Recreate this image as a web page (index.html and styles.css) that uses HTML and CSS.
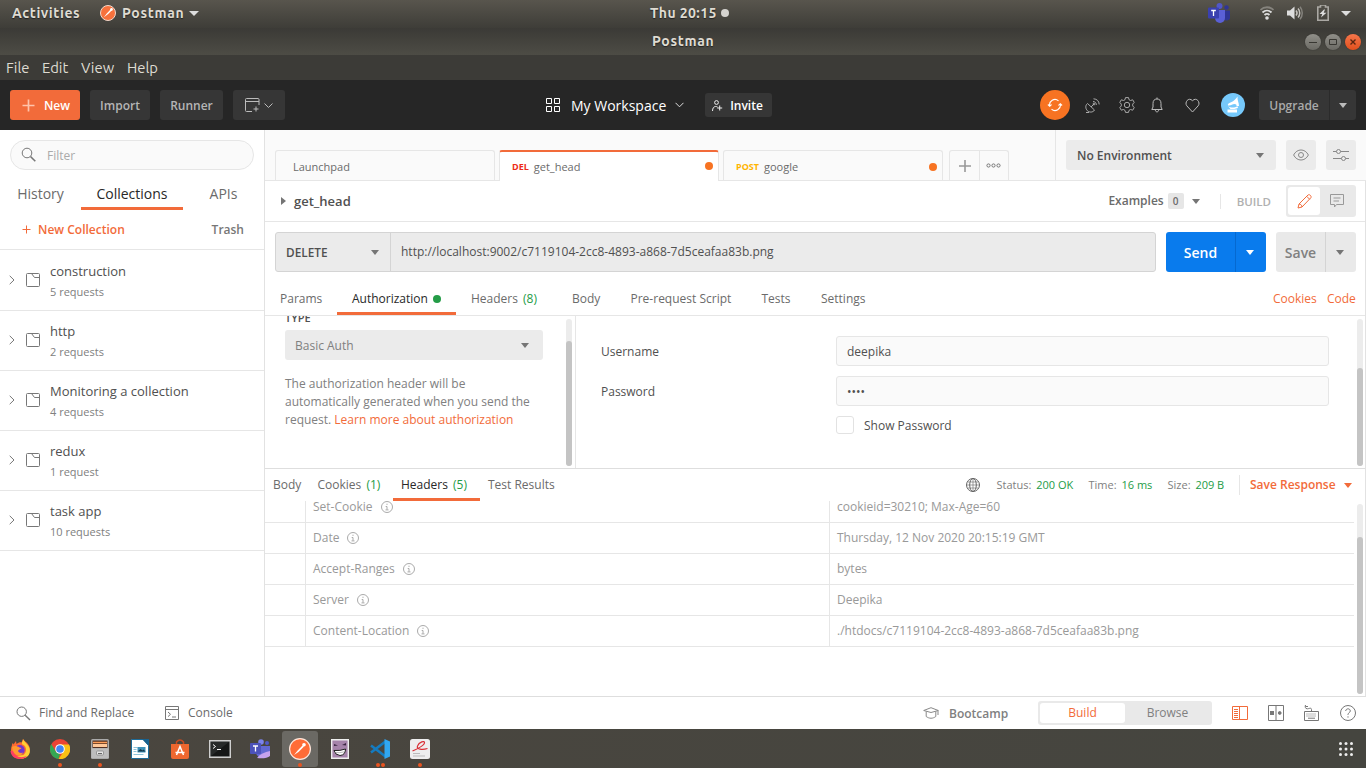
FILE: index.html
```html
<!DOCTYPE html>
<html lang="en">
<head>
<meta charset="utf-8">
<title>Postman</title>
<link rel="stylesheet" href="styles.css">
</head>
<body>
<div class="desktop">
  <div class="panel">
    <span class="panel-activities">Activities</span>
    <svg class="panel-logo" width="16" height="16" viewBox="0 0 16 16"><circle cx="8" cy="8" r="7.5" fill="#f7713c" stroke="#f3d9cc"/><path d="M3.6 12.6 7 8.2 11 4l1.2.9-4 4.2z" fill="#fff"/><circle cx="11.5" cy="4.4" r="1.3" fill="#fff"/></svg>
    <span class="panel-app">Postman</span>
    <i class="caret light"></i>
    <span class="panel-clock">Thu 20:15</span>
    <i class="panel-dot"></i>
    <svg class="teams-tray" width="22" height="20" viewBox="0 0 22 20"><circle cx="18.500" cy="4.500" r="2.200" fill="#2f3594"/><circle cx="11.500" cy="3" r="3" fill="#5157c8"/><path d="M16 7.500h6v8a4 4 0 0 1-6 1z" fill="#2f3594"/><path d="M7 7h10v8a5 5 0 0 1-10 0z" fill="#5a60d6"/><rect y="4.500" width="11" height="11" rx="1" fill="#3a40b0"/><path d="M3.200 7.500h4.600M5.500 7.500V13" stroke="#fff" stroke-width="1.300"/></svg>
    <svg class="wifi" width="14" height="14" viewBox="0 0 14 14" fill="none" stroke-width="1.800"><path d="M.5 4C4 .3 10 .3 13.500 4" stroke="#85837d"/><path d="M2.500 6.500c2.700-2.600 6.300-2.600 9 0M4.500 9c1.500-1.400 3.500-1.400 5 0" stroke="#ddd"/><circle cx="7" cy="12" r="1.800" fill="#ddd"/></svg>
    <svg class="volume" width="16" height="14" viewBox="0 0 16 14" fill="none" stroke-width="1.500"><path d="M0 4.500h3L7.500.5v13L3 9.500H0z" fill="#ddd"/><path d="M9 4.500c1.300 1.500 1.300 3.500 0 5M11 2.500c2.300 2.500 2.300 6.500 0 9" stroke="#c5c3be"/><path d="M13 .8c3 3.500 3 9 0 12.400" stroke="#85837d"/></svg>
    <svg class="battery" width="12" height="16" viewBox="0 0 12 16"><path d="M3.500 2V0h5v2h2.700v13.200H.8V2z" fill="none" stroke="#aaa8a3" stroke-width="1.600"/><path d="M7 4.500 2.500 9h2.800L4 12.500 9.500 7.800H6.700L8 4.500z" fill="#ddd"/></svg>
    <i class="caret light"></i>
  </div>
  <div class="titlebar">
    <span class="title">Postman</span>
    <span class="win"><svg width="16" height="16" viewBox="0 0 16 16" fill="none" stroke="#383732"><path d="M4 8.500h8"/></svg></span>
    <span class="win"><svg width="16" height="16" viewBox="0 0 16 16" fill="none" stroke="#383732"><path d="M4.500 5.500h7v5h-7z"/></svg></span>
    <span class="win close"><svg width="16" height="16" viewBox="0 0 16 16" fill="none" stroke="#5a2611" stroke-width="1.400"><path d="m5.500 5.500 5 5m0-5-5 5"/></svg></span>
  </div>
  <div class="menubar"><span>File</span><span>Edit</span><span>View</span><span>Help</span></div>

  <header class="header">
    <div class="group actions">
      <button class="btn new"><svg width="13" height="13" viewBox="0 0 13 13" stroke="#ffc3aa" stroke-width="1.700"><path d="M6.500.500v12M.500 6.500h12"/></svg>New</button>
      <button class="btn import">Import</button>
      <button class="btn runner">Runner</button>
      <button class="btn window"><svg viewBox="0 0 28 15" fill="none" stroke="#bbb"><path d="M7 13.500H1.500a1 1 0 0 1-1-1v-11a1 1 0 0 1 1-1H13a1 1 0 0 1 1 1V7M.5 3.500H14M11 8.500v5M8.500 11h5"/><path d="m19.500 5.500 4 4 4-4"/></svg></button>
    </div>
    <div class="group workspace">
      <svg width="14" height="14" viewBox="0 0 14 14" fill="none" stroke="#fff"><path d="M.5.500h5v5h-5zM8.500.500h5v5h-5zM.5 8.500h5v5h-5zM8.500 8.500h5v5h-5z"/></svg>
      <span class="ws-name">My Workspace</span>
      <svg class="ws-caret" width="9" height="6" viewBox="0 0 9 6" fill="none" stroke="#ddd"><path d="m.5.800 4 4 4-4"/></svg>
      <button class="btn invite"><svg width="11" height="12" viewBox="0 0 11 12" fill="none" stroke="#eee"><circle cx="4.500" cy="2.500" r="1.900"/><path d="M.5 11c.2-3 1-4.200 3-4.500 1 0 1.500.2 2 .5M7.700 5.500v5M5.200 8h5"/></svg>Invite</button>
    </div>
    <div class="group account">
      <span class="sync"><svg width="16" height="14" viewBox="0 0 16 14" fill="none" stroke="#fff" stroke-width="1.100"><path d="M2.700 8A5.400 5.400 0 0 1 11.500 2.800M13.300 6A5.400 5.400 0 0 1 4.500 11.200"/><path d="m.9 6.500 1.800 1.800 1.800-1.800M11.500 7.500l1.800-1.800 1.800 1.800"/></svg></span>
      <svg class="satellite" width="15" height="15" viewBox="0 0 15 15" fill="none" stroke="#aaa"><path d="M2.500 5.500c-2.500 2-2 5.500 0 7.300s5.500 1.800 7-.8zM6 9l3-3M1 14.500h3M8 3.500c2 0 3.300 1.400 3.400 3.400M8.500.800c3.500.2 5.500 2.200 5.700 5.600"/><circle cx="9" cy="6" r=".9"/></svg>
      <svg class="gear" width="16" height="16" viewBox="0 0 16 16" fill="none" stroke="#aaa"><path d="M6.500.600h3l.5 2.100 1.500.8 2.200-.700 1.500 2.600-1.500 1.700v1.800l1.500 1.700-1.500 2.600-2.200-.700-1.500.9-.5 2h-3l-.5-2-1.500-.9-2.200.7L.8 10.600l1.500-1.700V7.100L.8 5.400l1.500-2.600 2.200.7L6 2.700z"/><circle cx="8" cy="8" r="2.700"/></svg>
      <svg class="bell" width="12" height="16" viewBox="0 0 12 16" fill="none" stroke="#bbb"><path d="M6 .5v1.500M.8 12.500h10.400L10 10V6.500C10 3.500 8.500 2 6 2S2 3.500 2 6.500V10zM4.300 13c.2 2.500 3.200 2.500 3.400 0"/></svg>
      <svg class="heart" width="15" height="15" viewBox="0 0 15 15" fill="none" stroke="#bbb"><path d="M7.500 14 1.800 7.800C-.8 4.600 3.500-1.500 7.500 2.700c4-4.200 8.300 1.900 5.700 5.100z"/></svg>
      <svg class="avatar" width="24" height="24" viewBox="0 0 24 24"><circle cx="12" cy="12" r="12" fill="#76c9fb"/><path d="M16.500 3.500c-.3 4 1.500 6 1.500 9.500h-2.500c.3-1.200-.5-2-2-2-2.500 0-3.200 2-6.500 1.500-.7-1.200.5-2.300 3-3.300 3-1.200 5-3.200 6.500-5.700zM7 13c2.500 2 6.500 2 9.500.2l.5 1.800-3.500 1h-4zM6.500 16.500h9.500v3H6.500z" fill="#fff"/></svg>
      <span class="upgrade"><span class="upgrade-text">Upgrade</span><span class="upgrade-more"><i class="caret"></i></span></span>
    </div>
  </header>

  <main class="app">
    <aside class="sidebar">
      <div class="filter"><svg width="16" height="16" viewBox="0 0 16 16" fill="none" stroke="#777"><circle cx="6" cy="6" r="4.800"/><path d="m9.500 9.500 4.800 4.800" stroke-width="1.600"/></svg><span>Filter</span></div>
      <nav class="side-tabs"><span>History</span><span class="on">Collections</span><span>APIs</span></nav>
      <div class="side-actions"><span class="plus-new"><svg width="9" height="9" viewBox="0 0 9 9" stroke="#f26b3a"><path d="M4.500.5v8M.5 4.500h8"/></svg>New Collection</span><span>Trash</span></div>
      <div class="collections" id="collections"></div>
    </aside>

    <section class="work">
      <div class="tabbar">
        <div class="tab">Launchpad</div>
        <div class="tab active"><b class="del">DEL</b>get_head<i></i></div>
        <div class="tab third"><b class="post">POST</b>google<i></i></div>
        <div class="tabtools"><span><svg width="12" height="12" viewBox="0 0 12 12" stroke="#999" stroke-width="1.600"><path d="M6 0v12M0 6h12"/></svg></span><span><svg width="15" height="5" viewBox="0 0 15 5" fill="none" stroke="#777"><circle cx="2.500" cy="2.500" r="1.600"/><circle cx="7.500" cy="2.500" r="1.600"/><circle cx="12.500" cy="2.500" r="1.600"/></svg></span></div>
        <div class="env">
          <div class="select env-select"><span>No Environment</span><i class="caret"></i></div>
          <span class="square"><svg width="16" height="12" viewBox="0 0 16 12" fill="none" stroke="#888"><path d="M.6 6C4-.700 12-.700 15.400 6 12 12.700 4 12.700.6 6z"/><circle cx="8" cy="6" r="2.500"/></svg></span>
          <span class="square"><svg width="16" height="12" viewBox="0 0 16 12" fill="none" stroke="#888"><path d="M0 2.500h3.500M7.500 2.500H16M0 9.500h8.500M12.500 9.500H16"/><circle cx="5.500" cy="2.500" r="2"/><circle cx="10.500" cy="9.500" r="2"/></svg></span>
        </div>
      </div>
      <div class="pane">
        <div class="request-name">
          <i class="tri"></i><span class="rname">get_head</span>
          <span class="examples">Examples</span><span class="count">0</span><i class="caret"></i><span class="build">BUILD</span>
          <span class="mode"><span class="mode-on"><svg width="15" height="15" viewBox="0 0 15 15" fill="none" stroke="#f26b3a"><path d="m1 14 1-4L11 1c1.500-1.200 4 1.300 2.800 2.800L5 13zM9.700 2.300l3 3M2 10c1.700 0 3 1.300 3 3"/></svg></span><span class="mode-off"><svg width="14" height="14" viewBox="0 0 14 14" fill="none" stroke="#999"><path d="M.5.500h13v10H6.500l-2 2.500v-2.500h-4zM3.500 4h7M3.500 7H9"/></svg></span></span>
        </div>
        <div class="url-row">
          <div class="url-box"><span class="method">DELETE<i class="caret"></i></span><span class="url">http://localhost:9002/c7119104-2cc8-4893-a868-7d5ceafaa83b.png</span></div>
          <div class="send"><span>Send</span><span><i class="caret white"></i></span></div>
          <div class="save"><span>Save</span><span><i class="caret"></i></span></div>
        </div>
        <nav class="req-tabs"><span>Params</span><span class="on">Authorization<i></i></span><span class="req-headers">Headers <em>(8)</em></span><span>Body</span><span>Pre-request Script</span><span>Tests</span><span>Settings</span><a>Cookies</a><a>Code</a></nav>
        <div class="auth">
          <div class="auth-left">
            <div class="auth-type">TYPE</div>
            <div class="select auth-select"><span>Basic Auth</span><i class="caret"></i></div>
            <p>The authorization header will be<br>automatically generated when you send the<br>request. <a>Learn more about authorization</a></p>
            <div class="scroll auth-left-scroll"><i></i></div>
          </div>
          <div class="auth-right">
            <label>Username</label><div class="input">deepika</div>
            <label>Password</label><div class="input">••••</div>
            <div class="show"><i></i><span>Show Password</span></div>
            <div class="scroll auth-scroll"><i></i></div>
          </div>
        </div>
        <div class="res-bar">
          <span>Body</span><span>Cookies <em>(1)</em></span><span class="on">Headers <em>(5)</em></span><span>Test Results</span>
          <svg width="14" height="14" viewBox="0 0 14 14" fill="none" stroke="#666"><circle cx="7" cy="7" r="6.500"/><ellipse cx="7" cy="7" rx="3.300" ry="6.500"/><path d="M1.500 4h11M1.500 10h11M.5 7h13M7 .5v13" stroke-width=".6"/></svg>
          <small>Status: <em>200 OK</em></small><small>Time: <em>16 ms</em></small><small>Size: <em>209 B</em></small>
          <strong>Save Response<i class="caret orange"></i></strong>
        </div>
        <div class="response"><div class="headers" id="headers"></div><div class="scroll response-scroll"><i></i></div></div>
      </div>
    </section>
  </main>

  <footer class="status">
    <svg width="15" height="15" viewBox="0 0 15 15" fill="none" stroke="#777"><circle cx="5.700" cy="5.700" r="4.700"/><path d="m9.200 9.200 4.800 4.800" stroke-width="1.400"/></svg><span>Find and Replace</span>
    <svg width="14" height="14" viewBox="0 0 14 14" fill="none" stroke="#777"><path d="M.5.500h13v13H.5zM.5 3.500h13M3 6l2.500 2.300L3 10.600M7 11h4"/></svg><span>Console</span>
    <svg width="16" height="12" viewBox="0 0 16 12" fill="none" stroke="#888"><path d="M.7 3.500 8 .7l7.300 2.800L8 5.500zM3.200 4.500v5c3 2.300 6.600 2.300 9.600 0v-5M15 3.500V8"/></svg><span class="bootcamp">Bootcamp</span>
    <div class="switch"><span>Build</span><span>Browse</span></div>
    <svg width="16" height="14" viewBox="0 0 16 14" fill="none" stroke="#f26b3a"><path d="M.5.500h15v13H.5zM7.500.5v13M2 3.500h4M2 5.500h4M2 7.500h4M2 9.500h4M2 11.500h4"/></svg>
    <svg width="16" height="16" viewBox="0 0 16 16" fill="none" stroke="#777"><path d="M.5.500h15v15H.5zM8 .5v15"/><rect x="2.500" y="6.500" width="3" height="3" fill="#777"/><circle cx="11.700" cy="8" r="1.400" fill="#777"/></svg>
    <svg width="15" height="16" viewBox="0 0 15 16" fill="none" stroke="#777"><path d="M.5 6.500h14v9H.5zM7.500 6.500V4.500c0-2.500-3-.5-4.500-.7C1 3.500 1 1.500 1.500 0M1.500 1.500h2.500"/><path d="M2.500 9h10M2.500 11h10" stroke-dasharray="1 1"/><path d="M4 13.200h7"/></svg>
    <svg width="16" height="16" viewBox="0 0 16 16" fill="none" stroke="#777"><circle cx="8" cy="8" r="7.500"/><path d="M5.700 6c.2-3 4.600-2.800 4.600 0 0 1.500-2.300 1.800-2.300 3.500v.5M8 11.300v1.300"/></svg>
  </footer>

  <div class="dock">
    <span><svg viewBox="0 0 20 20"><path d="M2 6c0-1 .7-2 1-2l.5 1.500L6 2l.5 3c2-1.500 3.500-2 5-1.500L13 0c1 2 5.500 4 6.700 8.500C21 16 15.500 20 10 20S-1.500 15 2 6z" fill="#ff6a32"/><path d="M13 0c0 3-2 3.500-.5 5.500 4 1.500 5 7 1 10.500l-7 1c5 5 14 2 13.300-6C19.500 6 15 4 13 0z" fill="#ffcf35"/><circle cx="9.700" cy="11" r="5" fill="#7137cf"/><path d="M2 8c2-1.500 5-1.500 7.500.5l2 .5c-.5 1.500-3 1-3.500 3 .5 2 3.500 2.500 5 1.500-1.500 5-10 3-10.500-3z" fill="#ff9a30"/><path d="M.5 12c.5 4 3 8 9.500 8 3 0 5-.7 7-3-6 2.500-12 1-14-5z" fill="#ff3e62"/></svg></span>
    <span class="one"><svg viewBox="0 0 20 20"><circle cx="10" cy="10" r="10" fill="#ea4335"/><path d="M1.300 5 6 13l4 2-1.500 5A10 10 0 0 1 1.300 5z" fill="#34a853"/><path d="M10 5.500h9A10 10 0 0 1 8.500 20L14 12z" fill="#fbc116"/><circle cx="10" cy="10" r="4.800" fill="#fff"/><circle cx="10" cy="10" r="3.800" fill="#4285f4"/></svg></span>
    <span class="one"><svg viewBox="0 0 20 20"><rect x="1" width="18" height="20" rx="1.500" fill="#aaa"/><path d="M2.500 1.500h15V9h-15z" fill="#533022"/><path d="M3 3.500h14" stroke="#ff9d57" stroke-width="1.500"/><path d="M3 6.500h14" stroke="#ffc798" stroke-width="3"/><path d="M1.500 9.500h17V19h-17z" fill="#bdbdbd"/><rect x="6.500" y="12" width="7" height="4" rx="1" fill="#e5e5e5" stroke="#888" stroke-width=".8"/><path d="M8 14.500h4" stroke="#666"/></svg></span>
    <span><svg viewBox="0 0 20 20"><path d="M1.500.500h11.500l5.500 6v13h-17z" fill="#fff" stroke="#1d6b98"/><path d="M12.500 0H19v7z" fill="#176290"/><path d="M3.500 8.500h4M3.500 10.500h3M3.500 12.500h3M3.500 15.500h10" stroke="#8ec5dc"/><path d="M7.500 8h8v5.500h-8z" fill="#3d91b8"/><path d="m7.500 12.500 3-2.500 2 1.500 1-1 2 2z" fill="#17384b"/></svg></span>
    <span><svg viewBox="0 0 20 20"><path d="M6.500 6V3q3.500-4 7 0v3" fill="none" stroke="#c74a20" stroke-width="1.500"/><path d="M1 5h18v13q0 2-2 2H3q-2 0-2-2z" fill="#ee672f"/><path d="m6.500 16 3.500-8.500L13.500 16M5.500 13.500h9" fill="none" stroke="#fff" stroke-width="1.500"/></svg></span>
    <span class="terminal"><svg viewBox="0 0 22 18"><path d="M.7.700h20.600v16.600H.7z" fill="#272a2a" stroke="#cfcfcf" stroke-width="1.400"/><path d="m2 16 18-14v14z" fill="#151717"/><path d="m4 4.500 2.500 2L4 8.500M8 9.500h4" fill="none" stroke="#fff"/></svg></span>
    <span><svg viewBox="0 0 20 20"><circle cx="11" cy="3" r="2.800" fill="#7b83eb"/><circle cx="17" cy="4" r="2" fill="#5059c9"/><path d="M6 7h14v7c0 3-3 4-4 2-2 4-9 3-10-2z" fill="#6269d2"/><rect y="4" width="11" height="11" rx="1" fill="#4c52ba"/><path d="M3 7h5M5.500 7v5.500" stroke="#fff" stroke-width="1.300"/><path d="M7 19c3-4 8-6 13.500-7v4.500Q17 20 7 19z" fill="#c6a2ee"/></svg></span>
    <span class="current one"><svg class="large" viewBox="0 0 22 22"><circle cx="11" cy="11" r="10.400" fill="#ff6c37" stroke="#ffe7dc" stroke-width="1.200"/><path d="m5 17 3.700-4.500L13.500 7.500l1.500 1-5.500 5.500z" fill="#fff"/><circle cx="15" cy="6.800" r="1.800" fill="#fff"/></svg></span>
    <span><svg viewBox="0 0 20 20"><path d="M1.700.7h16.600v18.600H1.700z" fill="#a583aa" stroke="#eee" stroke-width="1.400"/><path d="m4 5 4 1.500-4 .5M16 4l-4 2 4 .5" fill="#3c2643"/><path d="M4 11.500q6 .5 11.500-1.500Q15.500 16 10 16.500 5 16 4 11.500z" fill="#fff" stroke="#222"/><path d="M5 13.500q5 .7 10-.8" fill="none" stroke="#777" stroke-width=".5"/></svg></span>
    <span class="two"><svg viewBox="0 0 20 20"><path d="m1 6.500 14.500 11M1 13.500 15.500 2.500" stroke="#147bc0" stroke-width="2.600"/><path d="M14.500 0 20 2.500v15L14.500 20z" fill="#31a7f1"/></svg></span>
    <span class="one"><svg viewBox="0 0 20 20"><rect width="20" height="20" rx="2.500" fill="#eee"/><path d="M17.500 9.500c-5 1.500-11.500 1-10-2.500C9 3 15 1 14.500 4S8 9.500 2.500 12" fill="none" stroke="#d93036" stroke-width="1.200"/><path d="M3 14.500h7M3 17h12" stroke="#bbb"/></svg></span>
    <svg class="grid" width="14" height="14" viewBox="0 0 14 14" fill="#eee"><circle cx="1.500" cy="1.500" r="1.500"/><circle cx="7" cy="1.500" r="1.500"/><circle cx="12.500" cy="1.500" r="1.500"/><circle cx="1.500" cy="7" r="1.500"/><circle cx="7" cy="7" r="1.500"/><circle cx="12.500" cy="7" r="1.500"/><circle cx="1.500" cy="12.500" r="1.500"/><circle cx="7" cy="12.500" r="1.500"/><circle cx="12.500" cy="12.500" r="1.500"/></svg>
  </div>
</div>
<script src="app.js"></script>
</body>
</html>
```
FILE: app.js
```js
const collections = [
  ['construction', '5 requests'],
  ['http', '2 requests'],
  ['Monitoring a collection', '4 requests'],
  ['redux', '1 request'],
  ['task app', '10 requests']
];
document.getElementById('collections').innerHTML = collections.map(([name, count]) => `
  <div class="collection">
    <svg width="6" height="10" viewBox="0 0 6 10" fill="none" stroke="#777"><path d="m.7.8 4.300 4.200L.7 9.200"/></svg>
    <svg width="14" height="14" viewBox="0 0 14 14" fill="none" stroke="#777"><path d="M1.500.5h11a1 1 0 0 1 1 1v11a1 1 0 0 1-1 1h-11a1 1 0 0 1-1-1v-11a1 1 0 0 1 1-1zM5.500.5l3 4h5"/></svg>
    <div><h4>${name}</h4><p>${count}</p></div>
  </div>`).join('');

const headers = [
  ['Set-Cookie', 'cookieid=30210; Max-Age=60'],
  ['Date', 'Thursday, 12 Nov 2020 20:15:19 GMT'],
  ['Accept-Ranges', 'bytes'],
  ['Server', 'Deepika'],
  ['Content-Location', './htdocs/c7119104-2cc8-4893-a868-7d5ceafaa83b.png']
];
document.getElementById('headers').innerHTML = headers.map(([key, value]) => `
  <div class="hrow"><span></span><span>${key}<svg width="12" height="12" viewBox="0 0 12 12" fill="none" stroke="#aaa"><circle cx="6" cy="6" r="5.500"/><path d="M6 2.700v1.200M4.700 5.500H6v3.200M4.500 8.900h3"/></svg></span><span>${value}</span></div>`).join('');
```
FILE: styles.css
```css
* { box-sizing: border-box; }
body { margin: 0; font: 12px/18px "Open Sans", "Noto Sans", sans-serif; color: #6b6b6b; background: #fff; overflow: hidden; }
svg { display: block; flex: none; }
i, em { font-style: normal; }
p, h4 { margin: 0; font-weight: 400; }
button { border: 0; padding: 0; font: inherit; }
span, a, small { white-space: nowrap; }
.desktop { width: 1366px; height: 768px; display: flex; flex-direction: column; }

.caret { width: 0; height: 0; flex: none; border: 4.5px solid transparent; border-top: 5px solid #757575; border-bottom: 0; }
.caret.light { border-width: 5px 5px 0; border-top-color: #ddd; }
.caret.white { border-top-color: #fff; }
.caret.orange { border-top-color: #f26b3a; }

/* System bars */
.panel { height: 28px; flex: none; background: linear-gradient(#58554d, #3e3d38); display: grid; grid-template-columns: 88px 22px 67px 461px 71px 487px 52px 27px 30px 24px 1fr; padding: 0 0 2px 12px; align-items: center; color: #dfdbd2; font: 600 14px/26px "Ubuntu", "Noto Sans", sans-serif; text-shadow: 0 1px 1px #222; }
.panel-activities { letter-spacing: .6px; }
.panel-app { letter-spacing: .7px; }
.panel-clock { letter-spacing: .4px; }
.panel-dot { width: 8px; height: 8px; border-radius: 50%; background: #d5d3cf; }
.titlebar { height: 27px; flex: none; background: linear-gradient(#3b3a36, #4d4c45); display: flex; align-items: center; justify-content: flex-end; gap: 4px; padding-right: 5px; color: #dfdbd2; font: 600 14px/24px "Ubuntu", "Noto Sans", sans-serif; text-shadow: 0 1px 1px #222; }
.title { margin: 0 auto 2px 0; padding-left: 652px; letter-spacing: .7px; }
.win { width: 16px; height: 16px; border-radius: 50%; background: linear-gradient(#908f89, #6b6a64); box-shadow: 0 0 1px #222; }
.win.close { background: linear-gradient(#f5764b, #e2501d); }
.menubar { height: 25px; flex: none; background: #3c3b37; display: grid; grid-template-columns: 36px 39px 46px 1fr; padding-left: 6px; color: #dfdbd2; font: 14.8px/25px "Ubuntu", "Noto Sans", sans-serif; }

/* App header */
.header { height: 50px; flex: none; background: #262626; display: flex; align-items: center; padding: 0 10px; color: #fff; }
.group { display: flex; align-items: center; }
.actions { gap: 10px; width: 536px; }
.btn { height: 30px; border-radius: 3px; background: #363636; color: #b5b5b5; font-weight: 600; line-height: 20px; display: flex; align-items: center; justify-content: center; }
.new, .import, .runner { padding-top: 1px; }
.new { width: 70px; background: #f26b3a; color: #fff; gap: 9px; padding-left: 2px; }
.new svg { margin-top: -1px; }
.import { width: 60px; }
.runner { width: 63px; }
.window { width: 52px; }
.window svg { width: 28px; height: 15px; }
.workspace { width: 227px; }
.ws-name { width: 96px; margin: 2px 8px 0 11px; font-size: 14px; }
.invite { width: 67px; height: 24px; margin-left: 21px; padding-top: 1px; color: #fff; gap: 7px; padding-right: 2px; }
.account { margin-left: auto; }
.sync { width: 30px; height: 30px; border-radius: 50%; background: #f77322; display: grid; place-items: center; }
.satellite { margin-left: 15px; }
.gear { margin-left: 19px; }
.bell { margin-left: 16px; }
.heart { margin-left: 22px; }
.avatar { margin-left: 21px; }
.upgrade { width: 97px; height: 30px; margin-left: 14px; display: flex; border-radius: 3px; background: #363636; color: #aaa; font-weight: 600; font-size: 12px; }
.upgrade-text { width: 71px; text-align: center; line-height: 31px; border-right: 1px solid #2b2b2b; }
.upgrade-more { flex: 1; display: grid; place-items: center; }
.upgrade .caret { border-top-color: #bbb; }

/* Sidebar */
.app { height: 566px; flex: none; display: flex; }
.sidebar { width: 265px; border-right: 1px solid #e2e2e2; padding-top: 10px; }
.filter { width: 244px; height: 30px; margin: 0 10px; border: 1px solid #e6e6e6; border-radius: 15px; background: #fafafa; display: flex; align-items: center; padding-left: 10px; gap: 10px; color: #aaa; }
.filter span { padding-top: 2px; }
.side-tabs { height: 40px; display: grid; grid-template-columns: 81px 102px 81px; grid-template-rows: 40px; text-align: center; font-size: 14px; line-height: 48px; }
.side-tabs .on { color: #282828; border-bottom: 3px solid #f26b3a; }
.side-actions { height: 40px; border-bottom: 1px solid #e6e6e6; display: flex; justify-content: space-between; padding: 0 20px 0 22px; line-height: 39px; font-weight: 600; color: #777; }
.plus-new { display: flex; align-items: center; gap: 7px; color: #f26b3a; }
.collection { height: 60px; border-bottom: 1px solid #e6e6e6; display: flex; align-items: center; padding: 0 0 1px 9px; }
.collection:first-child { height: 61px; padding-top: 1px; }
.collection svg + svg { margin: 0 10px 0 11px; }
.collection div { padding-top: 3px; }
.collection h4 { color: #505050; font-size: 13px; line-height: 20px; }
.collection p { font-size: 11px; line-height: 20px; color: #808080; margin-top: 1px; }

/* Tabs */
.work { width: 1101px; }
.tabbar { height: 51px; background: #fafafa; border-bottom: 1px solid #e6e6e6; display: flex; align-items: flex-end; padding-left: 10px; }
.tab { width: 220px; height: 30px; border: 1px solid #e6e6e6; border-bottom: 0; border-radius: 3px 3px 0 0; display: flex; align-items: center; padding: 3px 5px 0 17px; font-size: 11px; }
.tab.active { height: 31px; margin: 0 3px -1px 4px; background: #fff; border-top: 2px solid #f26b3a; padding: 0 5px 0 12px; }
.tab.third { padding-left: 12px; margin: 0 6px 0 1px; }
.tab b { font-size: 9px; margin-right: 5px; }
.tab i { width: 8px; height: 8px; border-radius: 50%; background: #f77322; margin: -1px 0 0 auto; }
.del { color: #ed2b18; }
.post { color: #ffb400; }
.tabtools { width: 60px; height: 30px; display: flex; border: 1px solid #e6e6e6; border-bottom: 0; border-radius: 3px 3px 0 0; }
.tabtools span { flex: 1 1 0; display: grid; place-items: center; padding: 1px 0 0 1px; }
.tabtools span + span { border-left: 1px solid #e6e6e6; padding: 0 1px 0 0; }
.env { width: 311px; height: 50px; margin-left: auto; border-left: 1px solid #e6e6e6; display: flex; gap: 10px; padding: 10px 10px 0; }
.select { height: 30px; border-radius: 3px; background: #ebebeb; display: flex; align-items: center; justify-content: space-between; }
.select span { padding-top: 1px; line-height: 20px; }
.env-select { width: 210px; padding: 0 12px 0 11px; font-weight: 600; color: #505050; }
.square { width: 30px; height: 30px; background: #ebebeb; border-radius: 3px; display: grid; place-items: center; }

/* Request */
.pane { height: 515px; border-right: 1px solid #e2e2e2; }
.request-name { height: 41px; border-bottom: 1px solid #e6e6e6; display: flex; align-items: center; padding: 0 9px 0 16px; }
.tri { border: 4px solid transparent; border-left: 5px solid #757575; border-right: 0; }
.rname { margin: 0 0 0 8px; font-size: 13px; font-weight: 600; color: #505050; }
.examples { margin: 0 0 0 auto; font-weight: 600; }
.count { width: 16px; height: 16px; background: #e6e6e6; border-radius: 2px; font-size: 10px; line-height: 16px; text-align: center; font-weight: 600; margin: 0 8px 0 4px; }
.build { margin: 1px -1px 0 20px; padding: 0 16px; border-left: 1px solid #e6e6e6; color: #b0b0b0; font-size: 11.5px; font-weight: 600; line-height: 15px; }
.mode { width: 70px; height: 32px; border-radius: 3px; background: #e9e9e9; padding: 2px; display: flex; }
.mode span { width: 32px; height: 28px; border-radius: 3px; display: grid; place-items: center; }
.mode .mode-on { background: #fff; }
.mode .mode-off { width: 34px; }
.url-row { height: 60px; padding: 10px 9px 10px 10px; display: flex; gap: 10px; }
.url-box { width: 881px; border: 1px solid #d4d4d4; border-radius: 3px; background: #ebebeb; color: #505050; display: flex; }
.method { width: 115px; border-right: 1px solid #d4d4d4; padding: 0 11px 0 10px; display: flex; align-items: center; justify-content: space-between; font-weight: 600; font-size: 11.8px; }
.url { line-height: 37px; padding-left: 10px; }
.send, .save { height: 40px; border-radius: 3px; display: flex; font-size: 14px; font-weight: 600; line-height: 42px; }
.send { width: 100px; background: #097bed; color: #fff; }
.save { width: 80px; background: #e9e9e9; color: #808080; }
.send span, .save span { display: grid; place-items: center; flex: 1; }
.send span:first-child { flex: 0 0 70px; border-right: 1px solid #0569d0; }
.save span:first-child { flex: 0 0 50px; border-right: 1px solid #d4d4d4; }
.send span + span, .save span + span { padding-right: 2px; }
.req-tabs { height: 34px; border-bottom: 1px solid #e6e6e6; display: grid; grid-template-columns: 57px 119px 116px 58.500px 131px 59.500px 452px 54px 1fr; grid-template-rows: 33px; padding-left: 15px; line-height: 34px; }
.req-tabs .on, .res-bar .on { color: #282828; border-bottom: 3px solid #f26b3a; }
.req-tabs .on, .req-headers { padding-left: 15px; }
.req-tabs .on i { display: inline-block; width: 8px; height: 8px; border-radius: 50%; background: #249c47; margin-left: 5px; }
em { color: #249c47; }
.req-tabs em { margin-left: 2px; }
a { color: #f26b3a; }

/* Authorization */
.auth { height: 153px; border-bottom: 1px solid #dedede; display: flex; overflow: hidden; }
.auth-left { position: relative; width: 311px; border-right: 1px solid #e6e6e6; padding-left: 20px; color: #808080; }
.auth-type { height: 14px; line-height: 4px; font-size: 11px; font-weight: 600; color: #505050; overflow: hidden; }
.auth-select { width: 258px; padding: 0 14px 0 10px; margin-bottom: 15px; }
.auth-left p { line-height: 18px; white-space: nowrap; }
.scroll { position: absolute; width: 6px; border-radius: 3px; background: #ececec; display: flex; align-items: flex-end; }
.scroll i { width: 6px; border-radius: 3px; background: #c4c4c4; }
.auth-left-scroll { right: 3px; top: 3px; height: 147px; }
.auth-left-scroll i { height: 125px; }
.auth-right { position: relative; width: 789px; padding: 20px 0 0 25px; display: grid; grid-template-columns: 235px 493px; grid-template-rows: 30px 30px 18px; row-gap: 10px; line-height: 30px; color: #505050; }
.auth-right label { padding-top: 1px; }
.input { height: 30px; background: #fafafa; border: 1px solid #e6e6e6; border-radius: 3px; padding-left: 10px; line-height: 29px; }
.show { grid-column: 2; display: flex; align-items: center; gap: 10px; line-height: 18px; }
.show span { padding-top: 2px; }
.show i { width: 18px; height: 18px; border: 1px solid #e2e2e2; border-radius: 3px; }
.auth-scroll { right: 2px; top: 3px; height: 147px; }
.auth-scroll i { height: 98px; }

/* Response */
.res-bar { height: 32px; display: grid; grid-template-columns: 44.500px 75.500px 95px 478px 30.500px 92px 79px 71.500px 1fr; grid-template-rows: 32px; padding-left: 8px; line-height: 32px; }
.res-bar em { margin-left: 2px; }
.res-bar .on { padding-left: 8px; margin-right: 8px; }
.res-bar svg { align-self: center; }
.res-bar small { font-size: 11px; color: #808080; }
.res-bar strong { font-weight: 600; color: #f26b3a; display: flex; align-items: center; line-height: 20px; height: 20px; align-self: center; border-left: 1px solid #e6e6e6; padding-left: 10px; }
.res-bar strong .caret { margin-left: 8px; }
.response { position: relative; height: 195px; overflow: hidden; }
.headers { width: 1089px; margin-top: -9px; }
.hrow { height: 31px; display: grid; grid-template-columns: 40px 524px 1fr; grid-template-rows: 30px; line-height: 28px; color: #999; border-bottom: 1px solid #e6e6e6; }
.hrow span { padding: 0 0 0 7px; border-left: 1px solid #e6e6e6; display: flex; align-items: center; gap: 8px; }
.hrow span:first-child { border-left: 0; }
.response-scroll { right: 2px; top: 3px; height: 190px; }
.response-scroll i { height: 157px; }

/* Status bar */
.status { height: 33px; flex: none; border-top: 1px solid #dedede; display: grid; grid-template-columns: 23px 126px 23px 735px 26px 89px 194px 36px 36px 36px 1fr; padding-left: 16px; align-items: center; background: #fff; }
.bootcamp { font-weight: 600; color: #808080; padding-top: 1px; }
.switch { width: 174px; height: 24px; padding: 2px; border-radius: 3px; background: #e9e9e9; display: flex; line-height: 20px; text-align: center; color: #808080; }
.switch span { width: 85px; border-radius: 3px; }
.switch span:first-child { background: #fff; color: #f26b3a; }

/* Dock */
.dock { height: 39px; flex: none; background: linear-gradient(90deg, #4a463f, #45453f); display: flex; align-items: center; padding-right: 13px; }
.dock > span { width: 40px; height: 39px; display: grid; place-items: center; position: relative; }
.dock span svg { width: 20px; height: 20px; }
.dock .terminal svg { width: 22px; height: 18px; }
.dock .current svg { width: 22px; height: 22px; }
.dock .current { width: 36px; height: 36px; margin: 0 2px; border-radius: 3px; background: #6b6964; }
.one::after, .two::after { content: ""; position: absolute; bottom: 1px; left: 50%; width: 4px; height: 4px; margin-left: -2px; border-radius: 50%; background: #e95420; }
.dock .current::after { bottom: 0; }
.two::after { margin-left: -4px; box-shadow: 5px 0 #e95420; }
.grid { margin-left: auto; }
```
